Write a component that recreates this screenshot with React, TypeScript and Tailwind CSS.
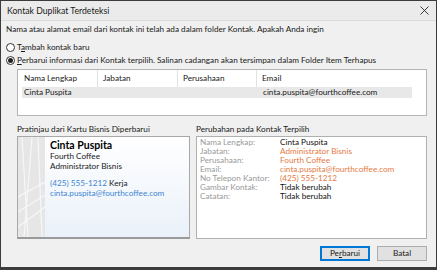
import React from "react";

const font = { fontFamily: 'Lato, "Noto Sans", sans-serif' };

function CardArt() {
  return (
    <svg width="27" height="100" viewBox="0 0 27 100" className="block">
      <rect width="27" height="100" fill="#e6e6e6" />
      <g stroke="#f7f7f7" strokeWidth="1.2" fill="none">
        <line x1="4" y1="0" x2="10" y2="100" />
        <line x1="14" y1="0" x2="6" y2="100" />
        <line x1="0" y1="60" x2="27" y2="45" />
        <line x1="0" y1="75" x2="27" y2="58" />
        <line x1="0" y1="90" x2="27" y2="70" />
        <line x1="20" y1="0" x2="24" y2="100" />
      </g>
    </svg>
  );
}

export default function App() {
  const changes: [string, string, boolean][] = [
    ["Nama Lengkap:", "Cinta Puspita", false],
    ["Jabatan:", "Administrator Bisnis", true],
    ["Perusahaan:", "Fourth Coffee", true],
    ["Email:", "cinta.puspita@fourthcoffee.com", true],
    ["No Telepon Kantor:", "(425) 555-1212", true],
    ["Gambar Kontak:", "Tidak berubah", false],
    ["Catatan:", "Tidak berubah", false],
  ];
  return (
    <div
      className="w-[437px] h-[270px] bg-[#3c3c3c] overflow-hidden text-[8.2px] text-[#1a1a1a]"
      style={font}
    >
      <div className="mx-px mt-px h-[266px] flex flex-col bg-[#f0f0f0]">
        <div className="h-[20px] flex items-center justify-between pl-[6px] pr-[7px] bg-[#ebebeb] border-b border-[#dcdcdc]">
          <span className="text-[8.7px]">Kontak Duplikat Terdeteksi</span>
          <svg width="9" height="9" viewBox="0 0 9 9">
            <path d="M0.5 0.5 L8.5 8.5 M8.5 0.5 L0.5 8.5" stroke="#222" strokeWidth="0.9" />
          </svg>
        </div>
        <div className="flex flex-col px-[5px] pt-[3px]">
          <div className="h-[11px] leading-[11px]">
            Nama atau alamat email dari kontak ini telah ada dalam folder Kontak. Apakah Anda ingin
          </div>
          <div className="mt-[7px] flex items-center gap-[2px] h-[11px]">
            <span className="w-[9px] h-[9px] rounded-full border border-[#333] bg-white" />
            <span>
              T<span className="underline">a</span>mbah kontak baru
            </span>
          </div>
          <div className="mt-[2px] flex items-center gap-[2px] h-[11px]">
            <span className="w-[9px] h-[9px] rounded-full border border-[#333] bg-white flex items-center justify-center">
              <span className="w-[5px] h-[5px] rounded-full bg-[#222]" />
            </span>
            <span>
              <span className="underline">P</span>erbarui informasi dari Kontak terpilih. Salinan cadangan akan tersimpan dalam Folder Item Terhapus
            </span>
          </div>
          <div className="ml-[11px] mr-[4px] mt-[3px] h-[47px] bg-white border border-[#b4b4b4] pl-[4px] pr-[14px]">
            <div className="flex h-[17px]">
              <div className="w-[76px] border-r border-[#e3e3e3] flex items-center pl-[2px]">Nama Lengkap</div>
              <div className="w-[80px] border-r border-[#e3e3e3] flex items-center pl-[5px]">Jabatan</div>
              <div className="w-[79px] border-r border-[#e3e3e3] flex items-center pl-[5px]">Perusahaan</div>
              <div className="flex-1 flex items-center pl-[5px]">Email</div>
            </div>
            <div className="flex h-[11px] bg-[#e8e8e8] items-center">
              <div className="w-[76px] pl-[2px]">Cinta Puspita</div>
              <div className="w-[80px]" />
              <div className="w-[79px]" />
              <div className="flex-1 pl-[6px]">cinta.puspita@fourthcoffee.com</div>
            </div>
          </div>
          <div className="ml-[11px] mr-[4px] mt-[8px] flex gap-[6px]">
            <div className="w-[173px] flex flex-col">
              <div className="h-[11px] leading-[11px]">Pratinjau dari Kartu Bisnis Diperbarui</div>
              <div className="mt-[1px] h-[103px] flex border border-[#a8a8a8] border-b-2 border-b-[#9a9a9a] bg-gradient-to-b from-white to-[#eaf1f9] overflow-hidden">
                <div className="w-[27px] bg-[#e6e6e6]">
                  <CardArt />
                </div>
                <div className="flex flex-col pl-[5px] pt-[2px]">
                  <div className="text-[10.5px] font-bold leading-[12px] text-black">Cinta Puspita</div>
                  <div className="leading-[9.5px] mt-[1px]">Fourth Coffee</div>
                  <div className="leading-[9.5px]">Administrator Bisnis</div>
                  <div className="leading-[9.5px] mt-[8px]">
                    <span className="text-[#3d86d3]">(425) 555-1212</span> Kerja
                  </div>
                  <div className="leading-[9.5px] text-[#3d86d3]">cinta.puspita@fourthcoffee.com</div>
                </div>
              </div>
            </div>
            <div className="flex-1 flex flex-col">
              <div className="h-[11px] leading-[11px]">Perubahan pada Kontak Terpilih</div>
              <div className="mt-[1px] h-[103px] bg-white border border-[#b0b0b0] pl-[3px] pt-[1px]">
                {changes.map(([l, v, o]) => (
                  <div key={l} className="flex h-[9px] leading-[9px]">
                    <span className="w-[80px] text-[#9a9a9a]">{l}</span>
                    <span className={o ? "text-[#e57a45]" : "text-[#111]"}>{v}</span>
                  </div>
                ))}
              </div>
            </div>
          </div>
          <div className="mt-[7px] flex justify-end gap-[7px] mr-[4px]">
            <div className="w-[50px] h-[15px] flex items-center justify-center bg-[#e1e1e1] border border-[#0078d7] shadow-[inset_0_0_0_1px_#0078d7]">
              Pe<span className="underline">r</span>barui
            </div>
            <div className="w-[50px] h-[15px] flex items-center justify-center bg-[#e1e1e1] border border-[#adadad]">
              Batal
            </div>
          </div>
        </div>
      </div>
    </div>
  );
}
